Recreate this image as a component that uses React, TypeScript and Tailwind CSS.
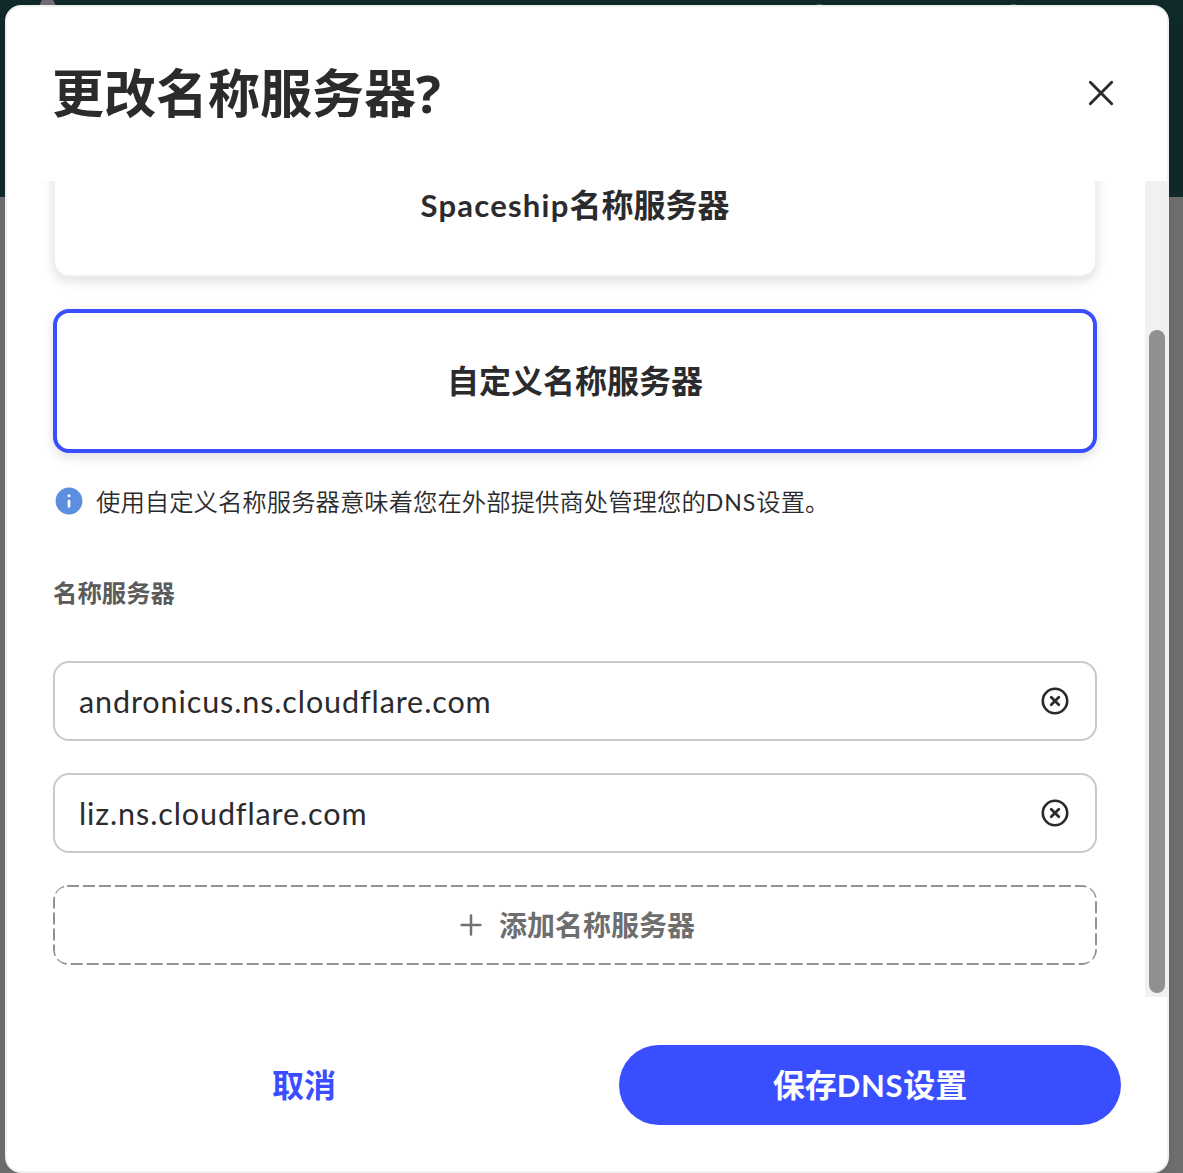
import React, { useState } from 'react';

function CloseIcon() {
  return (
    <svg width="32" height="32" viewBox="0 0 32 32" fill="none" stroke="#2b2b2d" strokeWidth="2.9" strokeLinecap="round">
      <path d="M5.3 5.3 26.7 26.7M26.7 5.3 5.3 26.7" />
    </svg>
  );
}

function InfoIcon() {
  return (
    <svg className="shrink-0" width="32" height="32" viewBox="0 0 32 32">
      <circle cx="16" cy="16" r="13.4" fill="#5c8fe0" />
      <circle cx="16" cy="10.7" r="1.5" fill="#fff" />
      <path d="M16 16v5.3" stroke="#fff" strokeWidth="2.7" strokeLinecap="round" />
    </svg>
  );
}

function ClearIcon() {
  return (
    <svg width="32" height="32" viewBox="0 0 32 32" fill="none" stroke="#28292b" strokeLinecap="round">
      <circle cx="16" cy="16" r="12.2" strokeWidth="2.6" />
      <path d="m12.2 12.2 7.6 7.6m0-7.6-7.6 7.6" strokeWidth="2.7" />
    </svg>
  );
}

function PlusIcon() {
  return (
    <svg width="24" height="24" viewBox="0 0 24 24" fill="none" stroke="#717171" strokeWidth="2.5" strokeLinecap="round">
      <path d="M12 2.600v18.800M2.600 12h18.800" />
    </svg>
  );
}

function ServerField({ value, onChange }: { value: string; onChange: (v: string) => void }) {
  return (
    <div className="flex h-20 items-center rounded-2xl border-2 border-[#c9c9c9] px-6">
      <input
        className="h-full min-w-0 flex-1 bg-transparent text-[30.5px] leading-none tracking-[0.9px] text-[#2b2b2d] outline-none"
        value={value}
        onChange={(e) => onChange(e.target.value)}
      />
      <button type="button" aria-label="清除" onClick={() => onChange('')}>
        <ClearIcon />
      </button>
    </div>
  );
}

export default function App() {
  const [servers, setServers] = useState(['andronicus.ns.cloudflare.com', 'liz.ns.cloudflare.com']);
  const update = (index: number, value: string) =>
    setServers((list) => list.map((item, i) => (i === index ? value : item)));

  return (
    <div className="relative h-[1173px] w-[1183px] overflow-hidden bg-[#6f6f71] font-[Lato,'Noto_Sans_CJK_SC',sans-serif] text-[#2b2b2d]">
      <div className="absolute inset-x-0 top-0 h-[197px] bg-[#102a2b]">
        <svg className="absolute left-0 top-0" width="1183" height="6" fill="#6f6f71">
          <path d="M39 6c1-2 1.700-4 3-6h11c1.300 2 2 4 3 6z" />
          <path d="M814 6c3-2.500 8-2.500 11 0z" />
          <path d="M1008 6c3-2.500 8-2.500 11 0z" />
        </svg>
      </div>

      <main className="relative ml-[5px] mt-[5px] flex h-[1168px] w-[1164px] flex-col rounded-2xl border-2 border-[#f0f0f0] bg-white shadow-[0_4px_20px_rgba(0,0,0,0.08)]">
        <header className="flex h-[174px] items-center justify-between pb-0.5 pl-[45px] pr-[50px]">
          <h1 className="pb-[3px] font-['Noto_Sans_CJK_SC',sans-serif] text-[52px] font-bold leading-[64px]">
            更改名称服务器<span className="font-['Open_Sans',sans-serif]">?</span>
          </h1>
          <button type="button" aria-label="关闭">
            <CloseIcon />
          </button>
        </header>

        <div className="flex h-[816px] shrink-0">
          <section className="flex min-w-0 flex-1 flex-col justify-end overflow-hidden pb-8 pl-[46px] pr-12">
            <button type="button" className="h-36 shrink-0 rounded-2xl border-2 border-[#efefef] bg-white text-[32px] font-bold leading-none shadow-[0_4px_12px_rgba(0,0,0,0.13)]">
              <span className="text-[31px] tracking-[1.25px]">Spaceship</span>名称服务器
            </button>
            <button type="button" className="mt-8 h-36 shrink-0 rounded-2xl border-4 border-[#394eff] bg-white text-[32px] font-bold leading-none shadow-[0_4px_12px_rgba(0,0,0,0.13)]">
              自定义名称服务器
            </button>
            <div className="mt-8 flex h-8 shrink-0 items-center gap-3">
              <InfoIcon />
              <p className="-ml-px whitespace-nowrap font-['Noto_Sans_CJK_SC',sans-serif] text-[24.4px] font-[350] leading-8">
                使用自定义名称服务器意味着您在外部提供商处管理您的<span className="font-[Lato] text-[23px] font-normal tracking-[1px]">DNS</span>设置。
              </p>
            </div>
            <h2 className="mt-[60px] text-[24.4px] font-bold leading-8 text-[#5b5b5b]">名称服务器</h2>
            <div className="mt-[52px] flex flex-col gap-8">
              {servers.map((server, i) => (
                <ServerField key={i} value={server} onChange={(v) => update(i, v)} />
              ))}
              <button
                type="button"
                onClick={() => setServers((list) => [...list, ''])}
                className="relative flex h-20 items-center justify-center gap-4 overflow-hidden rounded-2xl pl-1 text-[28px] font-bold leading-none text-[#6e6e6e]"
              >
                <svg className="absolute inset-0 h-full w-full" fill="none">
                  <rect width="100%" height="100%" rx="14" ry="14" stroke="#929292" strokeWidth="4" strokeDasharray="12 4" />
                </svg>
                <PlusIcon />
                <span>添加名称服务器</span>
              </button>
            </div>
          </section>
          <div className="flex w-[22px] shrink-0 items-end bg-[#f1f1f1] pb-1 pl-1">
            <div className="h-[663px] w-4 rounded-full bg-[#909090]" />
          </div>
        </div>

        <footer className="mt-12 flex gap-16 px-[46px] text-[32px] font-bold leading-none">
          <button type="button" className="h-20 flex-1 text-[#394eff]">取消</button>
          <button type="button" className="h-20 flex-1 rounded-full bg-[#394eff] text-white">
            保存<span className="text-[31px] tracking-[0.7px]">DNS</span>设置
          </button>
        </footer>
      </main>
    </div>
  );
}
